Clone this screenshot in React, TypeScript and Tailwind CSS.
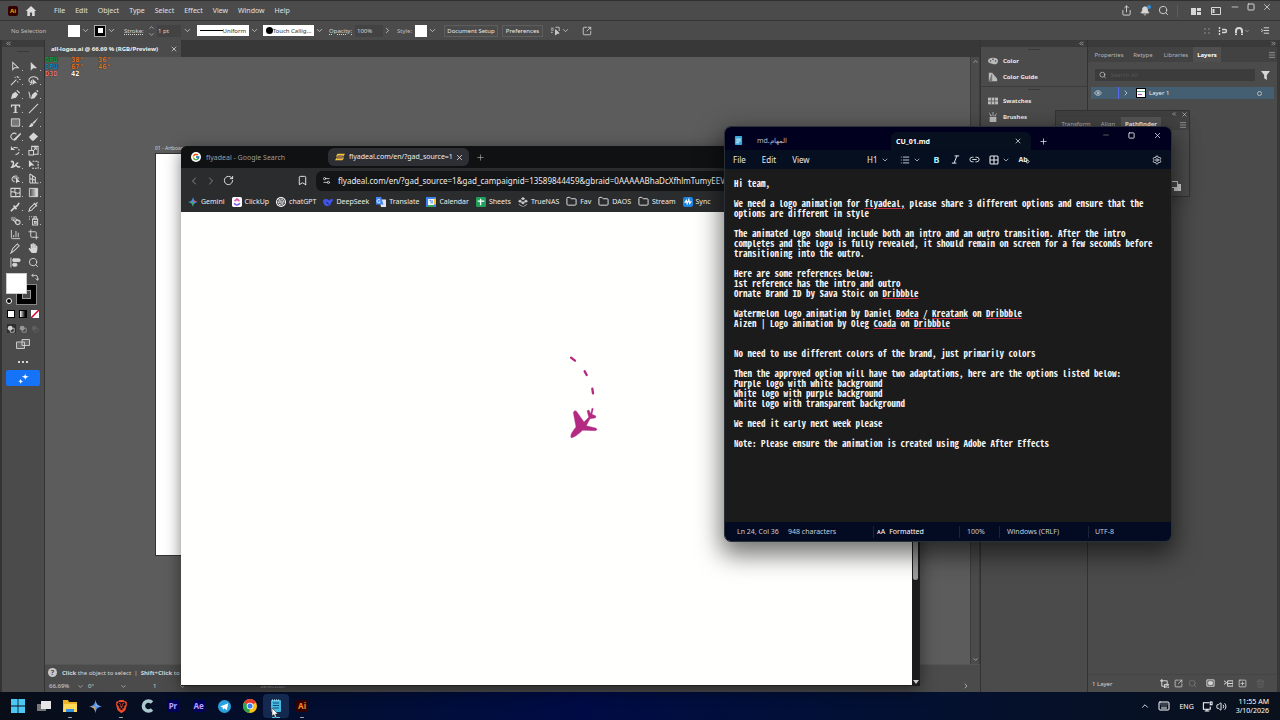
import type { ReactNode } from 'react'
import {
  AlignStartVertical,
  Bell,
  Bookmark,
  ChartColumn,
  ChevronDown,
  ChevronLeft,
  ChevronRight,
  ChevronUp,
  ChevronsLeft,
  ChevronsRight,
  Crop,
  Eye,
  Folder,
  Keyboard,
  Link2,
  List,
  Menu,
  Minus,
  Plus,
  RotateCw,
  Search,
  Settings,
  Settings2,
  Share,
  Square,
  SquareArrowOutUpRight,
  SquarePlus,
  Trash2,
  Volume2,
  X,
} from 'lucide-react'
import { FaHandPaper } from 'react-icons/fa'
import { FcGoogle } from 'react-icons/fc'
import { SiBrave, SiOpenai } from 'react-icons/si'

const menus = ['File', 'Edit', 'Object', 'Type', 'Select', 'Effect', 'View', 'Window', 'Help']

export default function App() {
  return (
    <div className="relative flex h-screen w-full flex-col overflow-hidden bg-[#4b4b4b] font-['Noto_Sans','Open_Sans',sans-serif] text-[7px] leading-none text-[#d6d6d6]">
      <Illustrator />
      <PathfinderPanel />
      <Browser />
      <Notepad />
      <Taskbar />
    </div>
  )
}

function IconButton({ label, className = '', children }: { label: string; className?: string; children: ReactNode }) {
  return (
    <button type="button" aria-label={label} className={`flex shrink-0 items-center justify-center ${className}`}>
      {children}
    </button>
  )
}

/* ---------- Illustrator ---------- */

function Illustrator() {
  return (
    <main className="flex min-h-0 flex-1 flex-col border-t border-[#303030]">
      <header className="flex h-5 shrink-0 items-center border-b border-[#353535] pl-2">
        <span className="flex size-[10px] items-center justify-center rounded-xs bg-[#330000] text-[6px] font-bold text-[#ff9a00]">Ai</span>
        <IconButton label="Home" className="ml-[7px]">
          <svg viewBox="0 0 12 12" className="size-3" fill="#dcdcdc"><path d="M6 1 .8 6h1.5v5h2.6V7.5h2.2V11h2.6V6h1.5z" /></svg>
        </IconButton>
        <nav className="ml-[17px] flex gap-[10px] text-[#e0e0e0]">
          {menus.map((m) => (
            <button type="button" key={m}>{m}</button>
          ))}
        </nav>
        <div className="ml-auto flex items-center">
          <IconButton label="Share"><Share className="size-[11px]" /></IconButton>
          <IconButton label="Notifications" className="relative ml-2">
            <Bell className="size-[10px] fill-[#d6d6d6]" />
            <i className="absolute -top-px -right-px size-1 rounded-full bg-[#2f8fdf]" />
          </IconButton>
          <IconButton label="Search" className="ml-2"><Search className="size-[11px]" /></IconButton>
          <i className="mx-2 h-3 w-px bg-[#5c5c5c]" />
          <IconButton label="Arrange documents" className="ml-1">
            <svg viewBox="0 0 12 10" className="h-[10px] w-3" fill="#d6d6d6"><path d="M1 2h5v7H1zM7 2h4v3H7zM7 6h4v3H7z" /></svg>
          </IconButton>
          <IconButton label="Workspace" className="ml-2">
            <svg viewBox="0 0 12 10" className="h-[10px] w-3" fill="none" stroke="#d6d6d6"><path d="M1.500 1.500h9v7h-9z" /><path d="M3.500 3v4" strokeWidth="2" /></svg>
          </IconButton>
          <div className="mb-[7px] ml-2 flex gap-[6px] pr-2">
            <IconButton label="Minimize"><Minus className="size-[10px]" /></IconButton>
            <IconButton label="Restore"><Square className="h-[8px] w-[10px]" strokeWidth={3} /></IconButton>
            <IconButton label="Close"><X className="size-[10px]" /></IconButton>
          </div>
        </div>
      </header>
      <ControlBar />
      <div className="flex min-h-0 flex-1">
        <ToolsPanel />
        <Document />
        <IconDock />
        <LayersPanel />
      </div>
    </main>
  )
}

function ControlBar() {
  return (
    <div className="flex h-[19px] shrink-0 items-center pl-[11px] text-[6px] whitespace-nowrap">
      <span className="w-[57px] text-[#bdbdbd]">No Selection</span>
      <IconButton label="Fill" className="size-3 bg-white"><i /></IconButton>
      <ChevronDown className="ml-px size-[9px]" />
      <IconButton label="Stroke colour" className="ml-1 size-3 border border-[#aaa] bg-black"><i className="size-[5px] bg-white" /></IconButton>
      <ChevronDown className="ml-px size-[9px]" />
      <label htmlFor="stroke" className="ml-2 w-[20px] underline decoration-dotted">Stroke:</label>
      <span className="ml-1 flex flex-col"><ChevronUp className="size-[7px]" /><ChevronDown className="size-[7px]" /></span>
      <input id="stroke" defaultValue="1 pt" className="ml-[2px] h-3 w-[24px] bg-[#434343] px-px outline-none" />
      <ChevronDown className="ml-[2px] size-[9px]" />
      <IconButton label="Variable width profile" className="ml-[5px] h-[11px] w-[52px] justify-between bg-white px-[3px] text-[#333]">
        <i className="h-px w-[23px] bg-black" />Uniform
      </IconButton>
      <ChevronDown className="ml-px size-[9px]" />
      <IconButton label="Brush definition" className="ml-1 h-[11px] w-[51px] justify-between bg-white px-[2px] text-[#333]">
        <i className="size-[7px] rounded-full bg-black" />Touch Callig...
      </IconButton>
      <ChevronDown className="ml-px size-[9px]" />
      <label htmlFor="opacity" className="ml-[5px] w-[23px] underline decoration-dotted">Opacity:</label>
      <input id="opacity" defaultValue="100%" className="ml-[3px] h-3 w-[28px] bg-[#434343] px-[2px] outline-none" />
      <ChevronRight className="size-[9px]" />
      <span className="ml-[5px] w-[15px] text-[#bdbdbd]">Style:</span>
      <IconButton label="Graphic style" className="ml-[3px] size-3 bg-white"><i /></IconButton>
      <ChevronDown className="ml-px size-[9px]" />
      <button type="button" className="ml-[7px] h-3 w-[54px] border border-[#5e5e5e] text-[#e8e8e8]">Document Setup</button>
      <button type="button" className="ml-1 h-3 w-[41px] border border-[#5e5e5e] text-[#e8e8e8]">Preferences</button>
      <IconButton label="Select similar" className="ml-[7px]">
        <svg viewBox="0 0 12 12" className="size-[11px]" fill="none" stroke="#c8c8c8"><path d="M1 3.500h3M1 5.500h3M1 8h2M6 2.500h4v4" /><path d="M6 5v6l2-2h2z" fill="#c8c8c8" /></svg>
      </IconButton>
      <ChevronDown className="size-[9px]" />
      <IconButton label="Edit artboard" className="ml-[12px]"><SquareArrowOutUpRight className="size-[10px]" /></IconButton>
      <div className="ml-auto flex items-center gap-[6px] pr-[10px]">
        <svg viewBox="0 0 10 10" className="size-[10px]" fill="#6c6c6c"><path d="M2 2h2v2H2zM6 2h2v2H6zM2 6h2v2H2zM6 6h2v2H6z" /></svg>
        <svg viewBox="0 0 10 10" className="size-[10px]" fill="none" stroke="#d6d6d6"><path d="M1.500 1v2M1.500 4v2M1.500 7v2M4 3.500h3a1.500 1.500 0 0 1 0 3H4" strokeWidth="1.400" /></svg>
        <span className="flex items-center">
          <svg viewBox="0 0 10 10" className="size-[10px]" fill="none" stroke="#d6d6d6" strokeWidth="2"><path d="M2 9V5a3 3 0 0 1 6 0v4" /><path d="M.5 7.500h3M6.500 7.500h3" stroke="#4b4b4b" strokeWidth=".6" /></svg>
          <ChevronDown className="size-[6px]" />
        </span>
        <svg viewBox="0 0 10 10" className="ml-[5px] size-[9px]" {...sw}><path d="M3 2h6M3 5h6M3 8h6M0 3l2 2-2 2" /></svg>
      </div>
    </div>
  )
}

const sw = { fill: 'none', stroke: 'currentColor', strokeWidth: 1.1 }

// Two per row, in the order of the toolbar.
const tools: [string, ReactNode][] = [
  ['Selection', <path {...sw} d="M3 1.500v8l2-2.200h4z" />],
  ['Direct selection', <path d="M3 1v9.500l2.500-2.500H10z" />],
  ['Magic wand', <path {...sw} d="M1 11l6-6M8 1v2M5 2l1 1M10 5h1.500M9 8l-1-1M10 2l-1 1" />],
  ['Lasso', <><path {...sw} d="M5 8.500C2 8.500 1 7 1 5.500S3 2 6 2s5 1.500 5 3.500M4 5.500c0 3 0 5-2 5" /><path d="M5 4v7l2-2h3z" /></>],
  ['Pen', <path d="M1 11l1.500-5.500L6 3l3 3-2.500 3.500zM7 2l1-1 3 3-1 1z" />],
  ['Curvature', <><path {...sw} d="M1 3c0 3 2 3 1 7" /><path d="M3 11l1.500-5L8 3l2.500 2.500L7 10zM9 2l1-1 1.500 1.500-1 1z" /></>],
  ['Type', <path d="M1 1.500h10v3H9.700V3H7v7h1.500v1h-5v-1H5V3H2.300v1.500H1z" />],
  ['Line segment', <path {...sw} d="M1 11L11 1" />],
  ['Rectangle', <path d="M1.500 2h9v8h-9z" fill="#777" stroke="currentColor" />],
  ['Paintbrush', <path d="M11.500.5L5 6l1.500 1.500zM4.500 6.500C2 7 3 9.500.5 10.500c2.500 1 5 .5 5.500-2.500z" />],
  ['Shaper', <><path {...sw} d="M7 3.500a3.500 3.500 0 1 0 0 5" /><path d="M11.500 2L5 8l-1 2.500L6.500 9.500 12 3.500z" /></>],
  ['Eraser', <path d="M1 6.500L6 1.500l5 4.500-5 4.500H4.500z" />],
  ['Rotate', <path {...sw} d="M1.500 1.500v3.500h3.500M2 4.500C4 1.500 10 2 10 6.500c0 2-1.500 4-4 4" strokeDasharray="7 1.500 2 1.500" />],
  ['Scale', <path {...sw} d="M1 6h5v5H1zM4 6V1.500h7V10H6M6 6l3-3M6.500 3H9v2.500" />],
  ['Width', <path {...sw} strokeWidth={1.700} d="M1 3c4-2 3 4 1 6 4 1 4-5 7-5M5 8c2-3 4 3 6 0" />],
  ['Free transform', <><path d="M1 1v8l2.500-2H7z" /><path {...sw} d="M5 2.500h6v7.500H3.500" strokeDasharray="2 1" /></>],
  ['Shape builder', <><path {...sw} d="M8 3.500a4 3 0 1 0-3 6M4 5.500h6" /><path d="M6.500 4.500v7l1.800-1.800H11z" /></>],
  ['Perspective grid', <path {...sw} d="M2 1v10M2 1l6 4v6H2M5 3v8M2 6l6 2M8 11h3.500" />],
  ['Mesh', <path {...sw} d="M1 1.500h10v9H1zM1 6c3-3 6 3 10 0M6 1.500c-3 3 2 5 0 9" />],
  ['Gradient', <path d="M1.500 1.500h9v9h-9z" fill="url(#tool-gradient)" stroke="currentColor" />],
  ['Ink', <path {...sw} strokeWidth={1.800} d="M1 11l3-3 4-3 2-3M4 5l3 4" />],
  ['Eyedropper', <path {...sw} d="M1 11l1-3 5-5 2 2-5 5zM6.500 2l3.500 3.500M8.500 3.500L10.500 1.500" />],
  ['Blend', <><path d="M1 2h5v4H1z" fill="#888" /><path {...sw} d="M3 5l4 4M6 4l4 3" /><circle {...sw} cx="8.500" cy="8" r="2.500" /></>],
  ['Symbol sprayer', <path {...sw} d="M1 2h1M3.500 2h1M1 4.500h1M5 4.500h5.500V11H5zM6.500 4V2H9v2M7 7h2v2H7z" />],
]

function ToolsPanel() {
  return (
    <aside className="flex w-[45px] shrink-0 flex-col border-r border-l-2 border-[#333] bg-[#4b4b4b]">
      <div className="flex h-[7px] items-center bg-[#3c3c3c] pl-[3px]"><ChevronsLeft className="size-[7px]" /></div>
      <i className="mx-auto mt-1 h-px w-3 bg-[#3a3a3a]" />
      <svg className="absolute size-0" aria-hidden="true">
        <defs><linearGradient id="tool-gradient"><stop stopColor="#444" /><stop offset="1" stopColor="#eee" /></linearGradient></defs>
      </svg>
      <div className="mt-[7px] grid grid-cols-2 pr-[2px] pl-1">
        {tools.map(([name, shape]) => (
          <IconButton key={name} label={name} className="relative h-[14px]">
            <svg viewBox="0 0 12 12" className="size-[11px]" fill="currentColor">{shape}</svg>
            <i className="absolute right-px bottom-[2px] size-px bg-[#bbb]" />
          </IconButton>
        ))}
        <IconButton label="Graph" className="h-[14px]"><ChartColumn className="size-[11px]" /></IconButton>
        <IconButton label="Artboard" className="h-[14px]"><Crop className="size-[11px]" /></IconButton>
        <IconButton label="Knife" className="h-[14px]"><svg viewBox="0 0 12 12" className="size-[11px]" {...sw}><path d="M1 11l2-5 5-5 2 2-5 5z" /></svg></IconButton>
        <IconButton label="Hand" className="h-[14px]"><FaHandPaper className="size-[10px]" /></IconButton>
        <IconButton label="Align" className="h-[14px]"><AlignStartVertical className="size-[11px] fill-current" /></IconButton>
        <IconButton label="Zoom" className="h-[14px]"><Search className="size-[11px]" /></IconButton>
      </div>
      <div className="relative mt-1 h-[33px]">
        <IconButton label="Stroke" className="absolute top-3 left-[15px] size-[19px] border-[5px] border-black outline outline-[#888]"><i className="size-[9px] border border-[#999] bg-[#4b4b4b]" /></IconButton>
        <IconButton label="Fill" className="absolute top-0 left-1 size-[21px] border border-[#ccc] bg-white"><i /></IconButton>
        <svg viewBox="0 0 10 10" className="absolute top-0 left-[29px] size-2" {...sw}><path d="M1 3h5a2 2 0 0 1 2 2v4M3 1L1 3l2 2M6 7l2 2 2-2" /></svg>
        <i className="absolute top-[25px] left-1 size-[6px] rounded-full border border-white bg-black" />
      </div>
      <div className="mt-1 flex justify-center gap-1">
        <IconButton label="Color" className="size-2 border border-black bg-white"><i /></IconButton>
        <IconButton label="Gradient" className="size-2 border border-black bg-linear-to-r from-white to-black"><i /></IconButton>
        <IconButton label="None" className="size-2 bg-white"><svg viewBox="0 0 8 8" className="size-2" stroke="#d00020" strokeWidth="1.500"><path d="M0 8L8 0" /></svg></IconButton>
      </div>
      <div className="mt-[6px] flex justify-center gap-[3px]">
        {['#cfcfcf', '#999', '#606060'].map((c, i) => (
          <IconButton key={c} label={`Draw mode ${i + 1}`} className={i === 0 ? 'size-[9px] bg-[#2e2e2e]' : 'size-[9px]'}>
            <svg viewBox="0 0 10 10" className="size-2"><circle cx="4" cy="4" r="3" fill={c} /><path d="M4 4h5v5H4z" fill="none" stroke={c} /></svg>
          </IconButton>
        ))}
      </div>
      <IconButton label="Screen mode" className="mt-[6px]">
        <svg viewBox="0 0 14 10" className="h-[10px] w-[14px]" fill="#666" stroke="#c8c8c8"><path d="M6 .5h7.500v6H6zM.5 3h8v6.500h-8z" /></svg>
      </IconButton>
      <button type="button" aria-label="Edit toolbar" className="mt-[10px] flex h-[6px] items-center justify-center gap-[2px]">
        {[0, 1, 2].map((n) => <i key={n} className="size-[2px] bg-[#d6d6d6]" />)}
      </button>
      <IconButton label="Generate" className="mt-[5px] ml-1 h-4 w-[34px] rounded-xs bg-[#1473f6]">
        <svg viewBox="0 0 12 12" className="size-[11px]" fill="#fff"><path d="M8 0c0 3 .5 3.500 4 4-3 .5-3.500 1-4 4-.5-3-1-3.500-4-4 3-.5 3.500-1 4-4zM3 6c0 2 .5 2.500 3 3-2 .5-2.500 1-3 3C2.500 10 2 9.500 0 9c2-.5 2.500-1 3-3z" /></svg>
      </IconButton>
    </aside>
  )
}

function Document() {
  return (
    <section className="flex min-w-0 flex-1 flex-col">
      <div className="flex h-[17px] shrink-0 bg-[#383838]">
        <div className="flex w-[136px] items-center bg-[#4b4b4b] pl-[6px] text-[6px] font-bold whitespace-nowrap text-[#f0f0f0]">
          all-logos.ai @ 66.69 % (RGB/Preview)
          <IconButton label="Close document" className="mr-[3px] ml-auto"><X className="size-2" /></IconButton>
        </div>
      </div>
      <div className="flex min-h-0 flex-1">
        <div className="min-w-0 flex-1 bg-[#5c5c5c]">
          <div className="grid w-[80px] grid-cols-[26px_27px_27px] font-['DejaVu_Sans_Mono',monospace] text-[7px] leading-[7px] font-bold text-[#e0782a] [text-shadow:0_0_1px_#000]">
            <span className="text-[#1f9a4c]">GPU</span><span>38°</span><span>36°</span>
            <span className="text-[#1e86cf]">CPU</span><span>67°</span><span>46°</span>
            <span className="text-[#e07a80]">D3D</span><span className="text-white">42</span>
          </div>
          <div className="ml-[110px] w-[600px] pt-[66px]">
            <p className="h-[9px] text-[5px] leading-[9px]">01 - Artboard 1</p>
            <div className="h-[403px] border border-[#333] bg-white" />
          </div>
        </div>
        <div className="flex w-[10px] flex-col items-center justify-between border-x border-[#3c3c3c] bg-[#4b4b4b] py-px">
          <ChevronUp className="size-[7px]" />
          <ChevronDown className="size-[7px]" />
        </div>
      </div>
      <div className="flex h-4 shrink-0 items-center border-t border-[#555] pl-[3px]">
        <i className="mr-[5px] flex size-[9px] items-center justify-center rounded-full bg-[#c8c8c8] text-[7px] font-bold text-[#444] not-italic">?</i>
        <span className="text-[6px] whitespace-nowrap"><b>Click</b> the object to select &nbsp;|&nbsp; <b>Shift+Click</b> to select multiple objects</span>
      </div>
      <div className="flex h-3 shrink-0 items-center pl-1 text-[6px]">
        <span className="w-[28px]">66.69%</span><ChevronDown className="size-[7px]" />
        <span className="ml-1 w-[32px]">0°</span><ChevronDown className="size-[7px]" />
        <span className="ml-[26px] w-[26px]">1</span><ChevronDown className="size-[7px]" />
        <span className="ml-[74px] text-[#999]">Selection</span>
        <ChevronRight className="mr-[10px] ml-auto size-[8px]" />
      </div>
    </section>
  )
}

function Gripper() {
  return <i className="mx-auto block h-px w-3 shrink-0 bg-[#383838]" />
}

function DockButton({ name, children }: { name: string; children: ReactNode }) {
  return (
    <button type="button" className="flex h-4 items-center gap-[5px] pl-[7px] text-[6px] font-bold text-[#e8e8e8]">
      <svg viewBox="0 0 12 12" className="size-[10px]" fill="#bcbcbc">{children}</svg>
      {name}
    </button>
  )
}

function IconDock() {
  return (
    <aside className="flex w-[108px] shrink-0 flex-col border-x border-[#333]">
      <div className="mb-[2px] flex h-[7px] justify-end bg-[#3a3a3a] pr-[2px]"><ChevronsLeft className="size-[7px]" /></div>
      <Gripper />
      <div className="mt-[3px] flex flex-col border-b border-[#3c3c3c] pb-px">
        <DockButton name="Color"><path d="M6 2C2 2 0 4 0 6s2 3 4 3 2 1 4 1 4-1 4-4-2-4-6-4zM3 7a1 1 0 1 1 0-2 1 1 0 0 1 0 2zm3-2a1 1 0 1 1 0-2 1 1 0 0 1 0 2zm3 2a1 1 0 1 1 0-2 1 1 0 0 1 0 2z" /></DockButton>
        <DockButton name="Color Guide"><path d="M1 1h4l6 7v3H1z" /><path d="M5 1v10H1" fill="#777" /></DockButton>
      </div>
      <div className="flex flex-col pt-[2px]">
        <Gripper />
        <i className="h-[3px]" />
        <DockButton name="Swatches"><path d="M0 2h12v8H0z" /><path d="M4 2v8M8 2v8M0 6h12" stroke="#555" /></DockButton>
        <DockButton name="Brushes"><path d="M2 6h8v6H2zM3 5L1 0l4 5M5.500 5V0h1v5M7 5l4-4-2 4" /></DockButton>
      </div>
    </aside>
  )
}

function LayersPanel() {
  return (
    <aside className="flex w-[192px] shrink-0 flex-col border-r-[3px] border-[#383838] text-[6px]">
      <div className="flex h-[7px] shrink-0 justify-end bg-[#3a3a3a]"><ChevronsRight className="size-[7px]" /></div>
      <div role="tablist" className="flex h-[15px] shrink-0 items-stretch bg-[#424242] pl-[3px] text-[#b4b4b4]">
        <button type="button" role="tab" className="w-[36px]">Properties</button>
        <button type="button" role="tab" className="w-[32px]">Retype</button>
        <button type="button" role="tab" className="w-[34px]">Libraries</button>
        <button type="button" role="tab" aria-selected="true" className="w-[28px] bg-[#4f4f4f] font-bold text-white">Layers</button>
        <Menu className="mt-1 mr-px ml-auto size-2" />
      </div>
      <div className="mt-[7px] flex items-center pr-[7px] pl-[7px]">
        <label className="flex h-3 flex-1 items-center gap-1 bg-[#3c3c3c] pl-1">
          <Search className="size-2" />
          <input aria-label="Search layers" placeholder="Search All" className="w-full outline-none placeholder:text-[#555]" />
        </label>
        <svg viewBox="0 0 10 10" className="ml-[6px] size-[9px]" fill="#d6d6d6"><path d="M0 0h10L6.500 4.500V10L3.500 8V4.500z" /></svg>
      </div>
      <div className="mx-[3px] mt-[6px] flex h-3 items-center bg-[#445e72] text-[#eee]">
        <Eye className="ml-[3px] size-2" />
        <i className="ml-[16px] h-full w-px bg-[#5868f0]" />
        <ChevronRight className="ml-[3px] size-2" />
        <i className="mr-[3px] ml-[6px] flex size-[10px] flex-col justify-evenly border border-black bg-white"><i className="h-px bg-[#6a8]" /><i className="ml-px h-px w-1 bg-[#a4c]" /></i>
        Layer 1
        <i className="mr-[12px] ml-auto size-[5px] rounded-full border border-[#bbb]" />
      </div>
      <footer className="mt-auto flex h-[18px] items-center gap-[5px] border-t border-[#444] px-1">
        <span className="mr-auto">1 Layer</span>
        <svg viewBox="0 0 10 10" className="size-[9px]" {...sw}><path d="M2 2h6v6H2zM0 2h3M2 0v3M5 6h5v4H5z" /></svg>
        <SquareArrowOutUpRight className="size-[9px]" />
        <Search className="size-[9px] text-[#777]" />
        <svg viewBox="0 0 10 10" className="ml-1 size-[9px]" {...sw}><path d="M1 1h8v7H1z" /><path d="M3 3h4v3H3z" fill="currentColor" /></svg>
        <svg viewBox="0 0 10 10" className="ml-1 size-[9px]" {...sw}><path d="M0 2l3 2-3 2M4 2h6v6H4zM4 5h6" /></svg>
        <SquarePlus className="size-[9px]" />
        <Trash2 className="mr-2 ml-1 size-[9px] text-[#666]" />
      </footer>
    </aside>
  )
}

function PathfinderPanel() {
  return (
    <aside className="absolute top-[110px] right-[90px] flex h-[87px] w-[135px] flex-col border border-[#333] bg-[#4b4b4b] text-[6px] shadow-lg">
      <div className="flex h-[6px] items-center justify-end gap-1 bg-[#3f3f3f] pr-px"><ChevronsLeft className="size-[6px]" /><X className="size-[7px]" /></div>
      <div role="tablist" className="flex h-[13px] bg-[#424242] pl-px text-[#b4b4b4]">
        <button type="button" role="tab" className="w-[38px]">Transform</button>
        <button type="button" role="tab" className="w-[26px]">Align</button>
        <button type="button" role="tab" aria-selected="true" className="w-[40px] bg-[#555] font-bold text-[#eee]">Pathfinder</button>
        <Menu className="mt-1 mr-[2px] ml-auto size-2" />
      </div>
      <svg viewBox="0 0 10 10" className="mt-auto mr-2 mb-[5px] ml-auto size-[10px]" fill="#d6d6d6"><path d="M3 3h7v7H3z" /><path d="M.5.5h6v6h-6z" fill="#4b4b4b" stroke="#d6d6d6" /></svg>
    </aside>
  )
}

/* ---------- Browser ---------- */

function GoogleDisc() {
  return <span className="flex size-[10px] items-center justify-center rounded-full bg-white"><FcGoogle className="size-2" /></span>
}

const bookmarks: [string, ReactNode][] = [
  ['Gemini', <svg viewBox="0 0 12 12" className="size-[10px]"><path d="M6 0c.6 4 2 5.400 6 6-4 .6-5.400 2-6 6-.6-4-2-5.400-6-6 4-.6 5.400-2 6-6z" fill="#4f8ff0" /><path d="M6 0c.6 4 2 5.400 6 6H6z" fill="#e8584a" /><path d="M0 6c4 .6 5.400 2 6 6V6z" fill="#3fa968" /></svg>],
  ['ClickUp', <svg viewBox="0 0 12 12" className="size-[10px]"><rect width="12" height="12" rx="2" fill="#fff" /><path d="M3 5l3-2.500L9 5" fill="none" stroke="#e84fa8" strokeWidth="1.800" /><path d="M2.500 7.500c2 2.700 5 2.700 7 0" fill="none" stroke="#7a5cf0" strokeWidth="1.800" /></svg>],
  ['chatGPT', <span className="flex size-[10px] items-center justify-center rounded-full bg-white"><SiOpenai className="size-2 text-black" /></span>],
  ['DeepSeek', <svg viewBox="0 0 12 12" className="size-[10px]"><path d="M0 4c2-2 5-2 7 0 1 0 2-1 2-2 1 1 2 1 3 0 0 3-1 4-2 4 0 3-2 5-5 5S0 8 0 4z" fill="#4054e8" /><path d="M4 6l3 3" stroke="#111" /></svg>],
  ['Translate', <svg viewBox="0 0 12 12" className="size-[10px]"><path d="M4 3h8v9H6z" fill="#dfe4ee" /><path d="M0 0h6l3 9H0z" fill="#4486f4" /><path d="M5 4a2 2 0 1 0 0 2H3.500" fill="none" stroke="#fff" /></svg>],
  ['Calendar', <svg viewBox="0 0 12 12" className="size-[10px]"><path d="M0 0h12v12H0z" fill="#3b82f0" /><path d="M9 2h3v7H9z" fill="#fbc02d" /><path d="M2 9h7v3H2z" fill="#34a853" /><path d="M2.500 2.500h7v7h-7z" fill="#fff" /><path d="M4 4h2v4M7.500 4v4" stroke="#3b82f0" fill="none" /></svg>],
  ['Sheets', <svg viewBox="0 0 12 12" className="size-[10px]"><rect width="12" height="12" rx="1.500" fill="#1fa05a" /><path d="M2 5h8M5.500 2v8" stroke="#fff" strokeWidth="1.600" /></svg>],
  ['TrueNAS', <svg viewBox="0 0 12 12" className="size-[10px]" fill="#ccc"><path d="M6 0l2.500 2L6 4 3.500 2zM2.500 3L5 5 2.500 7 0 5zM9.500 3L12 5 9.500 7 7 5zM6 5l2.500 2L6 9 3.500 7zM1 8l4.500 3v1L1 9zM11 8l-4.500 3v1L11 9z" /></svg>],
  ['Fav', <Folder className="size-[11px]" />],
  ['DAOS', <Folder className="size-[11px]" />],
  ['Stream', <Folder className="size-[11px]" />],
  ['Sync', <svg viewBox="0 0 12 12" className="size-[10px]"><rect width="12" height="12" rx="2.500" fill="#1c86e0" /><path d="M2 7l2-3 1 4 2-5 1 5 2-3" fill="none" stroke="#fff" strokeWidth="1.300" /></svg>],
]

function Browser() {
  return (
    <section aria-label="Browser" className="absolute top-[146px] right-[360px] bottom-[34px] left-[181px] flex flex-col overflow-hidden rounded-t-md bg-[#1e1e1e] pr-px pb-px text-[7px] text-[#ececec] shadow-[0_4px_16px_rgba(0,0,0,0.5)]">
      <div className="flex h-[22px] shrink-0 items-center bg-[#101113]">
        <button type="button" className="flex h-[18px] w-[147px] items-center gap-[5px] pl-[10px] text-[#9d9d9d]">
          <GoogleDisc />flyadeal - Google Search
        </button>
        <div className="flex h-[18px] w-[141px] items-center rounded-md bg-[#2e2f34] pl-[7px]">
          <svg viewBox="0 0 12 12" className="mr-1 size-[10px]" fill="#f1c930"><path d="M3 2h9l-2 3.500H1zM2 6.500h9L9 10H0z" /><path d="M3 4.500h7M2 7.500h7" stroke="#8a4c86" /></svg>
          <button type="button" className="w-[106px] text-left leading-3 whitespace-nowrap">flyadeal.com/en/?gad_source=1</button>
          <IconButton label="Close tab"><X className="size-[9px]" /></IconButton>
        </div>
        <IconButton label="New tab" className="ml-[7px] text-[#999]"><Plus className="size-[9px]" /></IconButton>
      </div>
      <div className="flex h-[25px] shrink-0 items-center bg-[#2b2c2e] pl-[7px]">
        <IconButton label="Back" className="text-[#888]"><ChevronLeft className="size-3" /></IconButton>
        <IconButton label="Forward" className="ml-[5px] text-[#888]"><ChevronRight className="size-3" /></IconButton>
        <IconButton label="Reload" className="ml-[6px]"><RotateCw className="size-[11px]" /></IconButton>
        <IconButton label="Bookmark this page" className="ml-[63px]"><Bookmark className="size-[11px]" /></IconButton>
        <div className="ml-2 flex h-[20px] min-w-0 flex-1 items-center rounded-md bg-[#141517] pl-[6px]">
          <Settings2 className="size-[9px] shrink-0" />
          <input aria-label="Address" defaultValue="flyadeal.com/en/?gad_source=1&gad_campaignid=13589844459&gbraid=0AAAAABhaDcXfhlmTumyEEV4N" className="ml-[7px] min-w-0 flex-1 text-[8px] outline-none" />
        </div>
      </div>
      <nav className="flex h-[19px] shrink-0 items-center gap-[7px] bg-[#2b2c2e] pb-[2px] pl-[7px]">
        {bookmarks.map(([name, icon]) => (
          <a href="#" key={name} className="flex items-center gap-[3px]">{icon}{name}</a>
        ))}
      </nav>
      <div className="flex min-h-0 flex-1">
        <div className="flex flex-1 items-start bg-[#fffffd] pt-[142px] pl-[386px]">
          <svg viewBox="81 42 96 258" className="h-[86px] w-8" fill="#b32a82" stroke="#b32a82" strokeLinejoin="round">
            <path d="M93 53l12 9M134 94l6 11M157 146l2 14" strokeWidth="7" strokeLinecap="round" />
            <path d="M93 293C90 285 98 273 108 261L100 219C101 211 108 210 111 216L132 246 146 232 141 212 147 210 152 221 156 204 160 206 156 223 168 228 166 234 150 236 139 257 167 264C173 267 171 272 165 272L128 271C116 282 102 294 93 293Z" />
          </svg>
        </div>
        <div className="flex w-[7px] flex-col items-center justify-between bg-[#1c1c1c] pb-px">
          <i className="h-[368px] w-[5px] rounded-full bg-[#9b9b9b]" />
          <svg viewBox="0 0 6 4" className="h-1 w-[6px]" fill="#ccc"><path d="M0 0h6L3 4z" /></svg>
        </div>
      </div>
    </section>
  )
}

/* ---------- Notepad ---------- */

function Typo({ children }: { children: ReactNode }) {
  return <span className="underline decoration-[#c0283c] decoration-1 underline-offset-1">{children}</span>
}

const note: ReactNode[] = [
  'Hi team,',
  '',
  <>We need a logo animation for <Typo>flyadeal,</Typo> please share 3 different options and ensure that the</>,
  'options are different in style',
  '',
  'The animated logo should include both an intro and an outro transition. After the intro',
  'completes and the logo is fully revealed, it should remain on screen for a few seconds before',
  'transitioning into the outro.',
  '',
  'Here are some references below:',
  '1st reference has the intro and outro',
  <>Ornate Brand ID by Sava Stoic on <Typo>Dribbble</Typo></>,
  '',
  <>Watermelon logo animation by Daniel <Typo>Bodea</Typo> / <Typo>Kreatank</Typo> on <Typo>Dribbble</Typo></>,
  <>Aizen | Logo animation by Oleg <Typo>Coada</Typo> on <Typo>Dribbble</Typo></>,
  '',
  '',
  'No need to use different colors of the brand, just primarily colors',
  '',
  'Then the approved option will have two adaptations, here are the options listed below:',
  'Purple logo with white background',
  'White logo with purple background',
  'White logo with transparent background',
  '',
  'We need it early next week please',
  '',
  'Note: Please ensure the animation is created using Adobe After Effects',
]

function Notepad() {
  return (
    <section aria-label="Notepad" className="absolute top-[127px] right-[109px] flex h-[414px] w-[446px] flex-col overflow-hidden rounded-md bg-[#1b1b1b] text-[8px] text-[#e8e8ee] shadow-[0_10px_24px_4px_rgba(0,0,0,0.55)] outline outline-[#2a3038]">
      <header className="flex h-[23px] shrink-0 bg-[#01011f]">
        <div className="flex w-[166px] items-center pt-1 pl-[9px]">
          <svg viewBox="0 0 10 10" className="size-[9px]"><rect x="1" width="8" height="10" rx="1" fill="#3aa8d8" /><path d="M2.500 3.500h5M2.500 5.500h5M2.500 7.500h3" stroke="#e8f8ff" /></svg>
          <button type="button" className="ml-[14px] text-[7px] text-[#b8b8c8]"><bdi dir="rtl">المهام.md</bdi></button>
        </div>
        <div className="mt-[5px] flex w-[140px] items-center justify-between rounded-t-md bg-[#07101f] pr-[9px] pl-[5px] text-white">
          <button type="button" className="text-[7px] font-bold">CU_01.md</button>
          <IconButton label="Close tab"><X className="size-2" /></IconButton>
        </div>
        <IconButton label="New tab" className="mt-[5px] ml-2"><Plus className="size-[9px]" /></IconButton>
        <div className="ml-auto flex h-4 items-center gap-[18px] pr-[9px]">
          <IconButton label="Minimize" className="text-[#888]"><Minus className="size-2" /></IconButton>
          <IconButton label="Maximize"><Square className="size-[7px]" strokeWidth={3} /></IconButton>
          <IconButton label="Close"><X className="size-[9px]" /></IconButton>
        </div>
      </header>
      <div className="flex h-[19px] shrink-0 items-center bg-[#050f1f] pl-2">
        <nav className="flex w-[134px] gap-4">
          <button type="button">File</button>
          <button type="button">Edit</button>
          <button type="button">View</button>
        </nav>
        <button type="button" className="flex items-center gap-[3px]">H1<ChevronDown className="size-2" /></button>
        <IconButton label="List" className="ml-[11px] gap-[3px]"><List className="size-[10px]" /><ChevronDown className="size-2" /></IconButton>
        <button type="button" aria-label="Bold" className="ml-[12px] w-2 text-[9px] font-bold text-[#a8ecff]">B</button>
        <IconButton label="Italic" className="ml-[10px]">
          <svg viewBox="0 0 10 10" className="size-[9px]" {...sw}><path d="M4 1h5M1 9h5M6.500 1l-3 8" /></svg>
        </IconButton>
        <IconButton label="Link" className="ml-[9px]"><Link2 className="size-[11px]" /></IconButton>
        <IconButton label="Table" className="ml-[9px] gap-[3px]">
          <svg viewBox="0 0 10 10" className="size-[10px]" {...sw}><rect x="1" y="1" width="8" height="8" rx="1" /><path d="M5 1v8M1 5h8" /></svg>
          <ChevronDown className="size-2" />
        </IconButton>
        <IconButton label="Clear formatting" className="relative ml-[9px] text-[7px] font-bold">
          Ab
          <svg viewBox="0 0 6 6" className="-mb-1 -ml-[3px] size-[5px]" {...sw}><path d="M1 3l2-2 2 2-2 2z" /></svg>
        </IconButton>
        <IconButton label="Settings" className="mr-[9px] ml-auto"><Settings className="size-[10px]" /></IconButton>
      </div>
      <div
        role="textbox" aria-multiline="true" aria-label="Document text" contentEditable suppressContentEditableWarning spellCheck={false}
        className="min-h-0 flex-1 bg-[#1b1b1b] pt-[10px] pl-[9px] font-['Noto_Sans_Mono_CJK_SC','Liberation_Mono',monospace] text-[9px] leading-[10px] font-bold whitespace-pre text-[#f4f4f4] outline-none"
      >
        {note.map((line, i) => (
          <p key={i} className="h-[10px]">{line}</p>
        ))}
      </div>
      <footer className="flex h-[19px] shrink-0 items-center bg-[#020b22] pl-3 text-[7px] text-[#c9ccd6]">
        <span className="w-[51px]">Ln 24, Col 36</span>
        <span className="w-[85px]">948 characters</span>
        <button type="button" className="flex h-3 w-[86px] items-center gap-1 border-l border-[#1b2438] pl-[3px] text-white"><span>ᴀA</span>Formatted</button>
        <span className="w-[40px] border-l border-[#1b2438] pl-[7px] leading-3">100%</span>
        <span className="w-[89px] border-l border-[#1b2438] pl-[7px] leading-3">Windows (CRLF)</span>
        <span className="border-l border-[#1b2438] pl-[6px] leading-3">UTF-8</span>
      </footer>
    </section>
  )
}

/* ---------- Taskbar ---------- */

function Adobe({ name, className }: { name: string; className: string }) {
  return <span className={`flex size-3 items-center justify-center rounded-xs text-[8px] font-bold ${className}`}>{name}</span>
}

const apps: { name: string; icon: ReactNode; open?: boolean; active?: boolean }[] = [
  { name: 'Start', icon: <svg viewBox="0 0 14 14" className="size-[14px]" fill="#4cc8f4"><path d="M0 0h6.600v6.600H0zM7.400 0H14v6.600H7.400zM0 7.400h6.600V14H0zM7.400 7.400H14V14H7.400z" /></svg> },
  { name: 'Task view', icon: <svg viewBox="0 0 14 14" className="size-[14px]"><path d="M0 5h9v7H0z" fill="#777" /><path d="M4 2h10v8H4z" fill="#e6e6e6" /></svg> },
  { name: 'File Explorer', open: true, icon: <svg viewBox="0 0 14 14" className="size-[14px]"><path d="M0 1h5l1 2h8v10H0z" fill="#f0b429" /><path d="M1 5h13v8H0z" fill="#ffd95a" /><path d="M3 10h8v3H3z" fill="#3a8fe0" /></svg> },
  { name: 'Gemini', icon: <svg viewBox="0 0 12 12" className="size-[13px]"><path d="M6 0c.6 4 2 5.400 6 6-4 .6-5.400 2-6 6-.6-4-2-5.400-6-6 4-.6 5.400-2 6-6z" fill="#4f8ff0" /><path d="M6 0c.6 4 2 5.400 6 6H6z" fill="#7fb0e8" /><path d="M0 6c4 .6 5.400 2 6 6V6z" fill="#c9a56c" /></svg> },
  { name: 'Brave', open: true, icon: <SiBrave className="size-[13px] text-[#f04a28]" /> },
  { name: 'Clash', icon: <svg viewBox="0 0 14 14" className="size-[14px]" fill="none" stroke="#a9c9cc" strokeWidth="3.500"><path d="M12 3.500A5 5 0 1 0 12 10.500" /></svg> },
  { name: 'Premiere Pro', icon: <Adobe name="Pr" className="bg-[#00005b] text-[#b9a0ff]" /> },
  { name: 'After Effects', icon: <Adobe name="Ae" className="bg-[#00005b] text-[#b9a0ff]" /> },
  { name: 'Telegram', icon: <svg viewBox="0 0 14 14" className="size-[13px]"><circle cx="7" cy="7" r="7" fill="#2aa1de" /><path d="M2.500 7L11 3.500 9.500 11 7 9 5.500 10.500 5 8z" fill="#fff" /></svg> },
  { name: 'Chrome', icon: <svg viewBox="0 0 14 14" className="size-[14px]"><circle cx="7" cy="7" r="7" fill="#fbc116" /><path d="M7 7L1 3.500A7 7 0 0 1 13 3.500z" fill="#e53a2e" /><path d="M7 7L1 3.500A7 7 0 0 0 6.500 14z" fill="#2ea350" /><circle cx="7" cy="7" r="3.300" fill="#fff" /><circle cx="7" cy="7" r="2.500" fill="#3d7df0" /></svg> },
  { name: 'Notepad', open: true, active: true, icon: <svg viewBox="0 0 14 14" className="size-[14px]"><rect x="2" y="1" width="10" height="12" rx="1" fill="#45b9e0" /><path d="M4 4h6M4 6.500h6M4 9h6" stroke="#11507a" /><path d="M3 1h8" stroke="#dff" strokeDasharray="1 1" /></svg> },
  { name: 'Illustrator', open: true, icon: <Adobe name="Ai" className="bg-[#330000] text-[#ff8a2a]" /> },
]

function Taskbar() {
  return (
    <footer className="flex h-7 shrink-0 items-center justify-between bg-linear-to-r from-[#080d18] via-[#000b45] via-45% to-[#0a111c] pl-[5px] text-white">
      <nav className="grid w-[310px] grid-cols-12">
        {apps.map((a) => (
          <IconButton key={a.name} label={a.name} className={a.active ? 'relative h-6 rounded-sm bg-[#13294f]' : 'relative h-6'}>
            {a.icon}
            {a.open && <i className={a.active ? 'absolute bottom-0 h-px w-2 rounded-full bg-[#5cc8f4]' : 'absolute bottom-0 h-px w-1 rounded-full bg-[#aaa]'} />}
            {a.active && (
              <svg viewBox="0 0 8 10" className="absolute top-[14px] left-2 h-[10px] w-2" fill="#fff" stroke="#222" strokeWidth=".5"><path d="M1 0v8l2-1.500 1 3 1.500-.5-1-3H7z" /></svg>
            )}
          </IconButton>
        ))}
      </nav>
      <div className="flex items-center pr-[11px]">
        <IconButton label="Show hidden icons"><ChevronUp className="size-[10px]" /></IconButton>
        <IconButton label="Touch keyboard" className="ml-2"><Keyboard className="size-3" /></IconButton>
        <button type="button" className="ml-[9px]">ENG</button>
        <IconButton label="Network and volume" className="ml-2 gap-[3px]">
          <svg viewBox="0 0 12 12" className="size-[11px]" {...sw}><path d="M8 2H1.500v7h7.500V6M3 11h5M5.500 9v2M9 1h2v3H9z" /></svg>
          <Volume2 className="size-[11px]" />
        </IconButton>
        <button type="button" className="ml-[9px] text-right leading-[9px]">11:55 AM<br />3/10/2026</button>
      </div>
    </footer>
  )
}
